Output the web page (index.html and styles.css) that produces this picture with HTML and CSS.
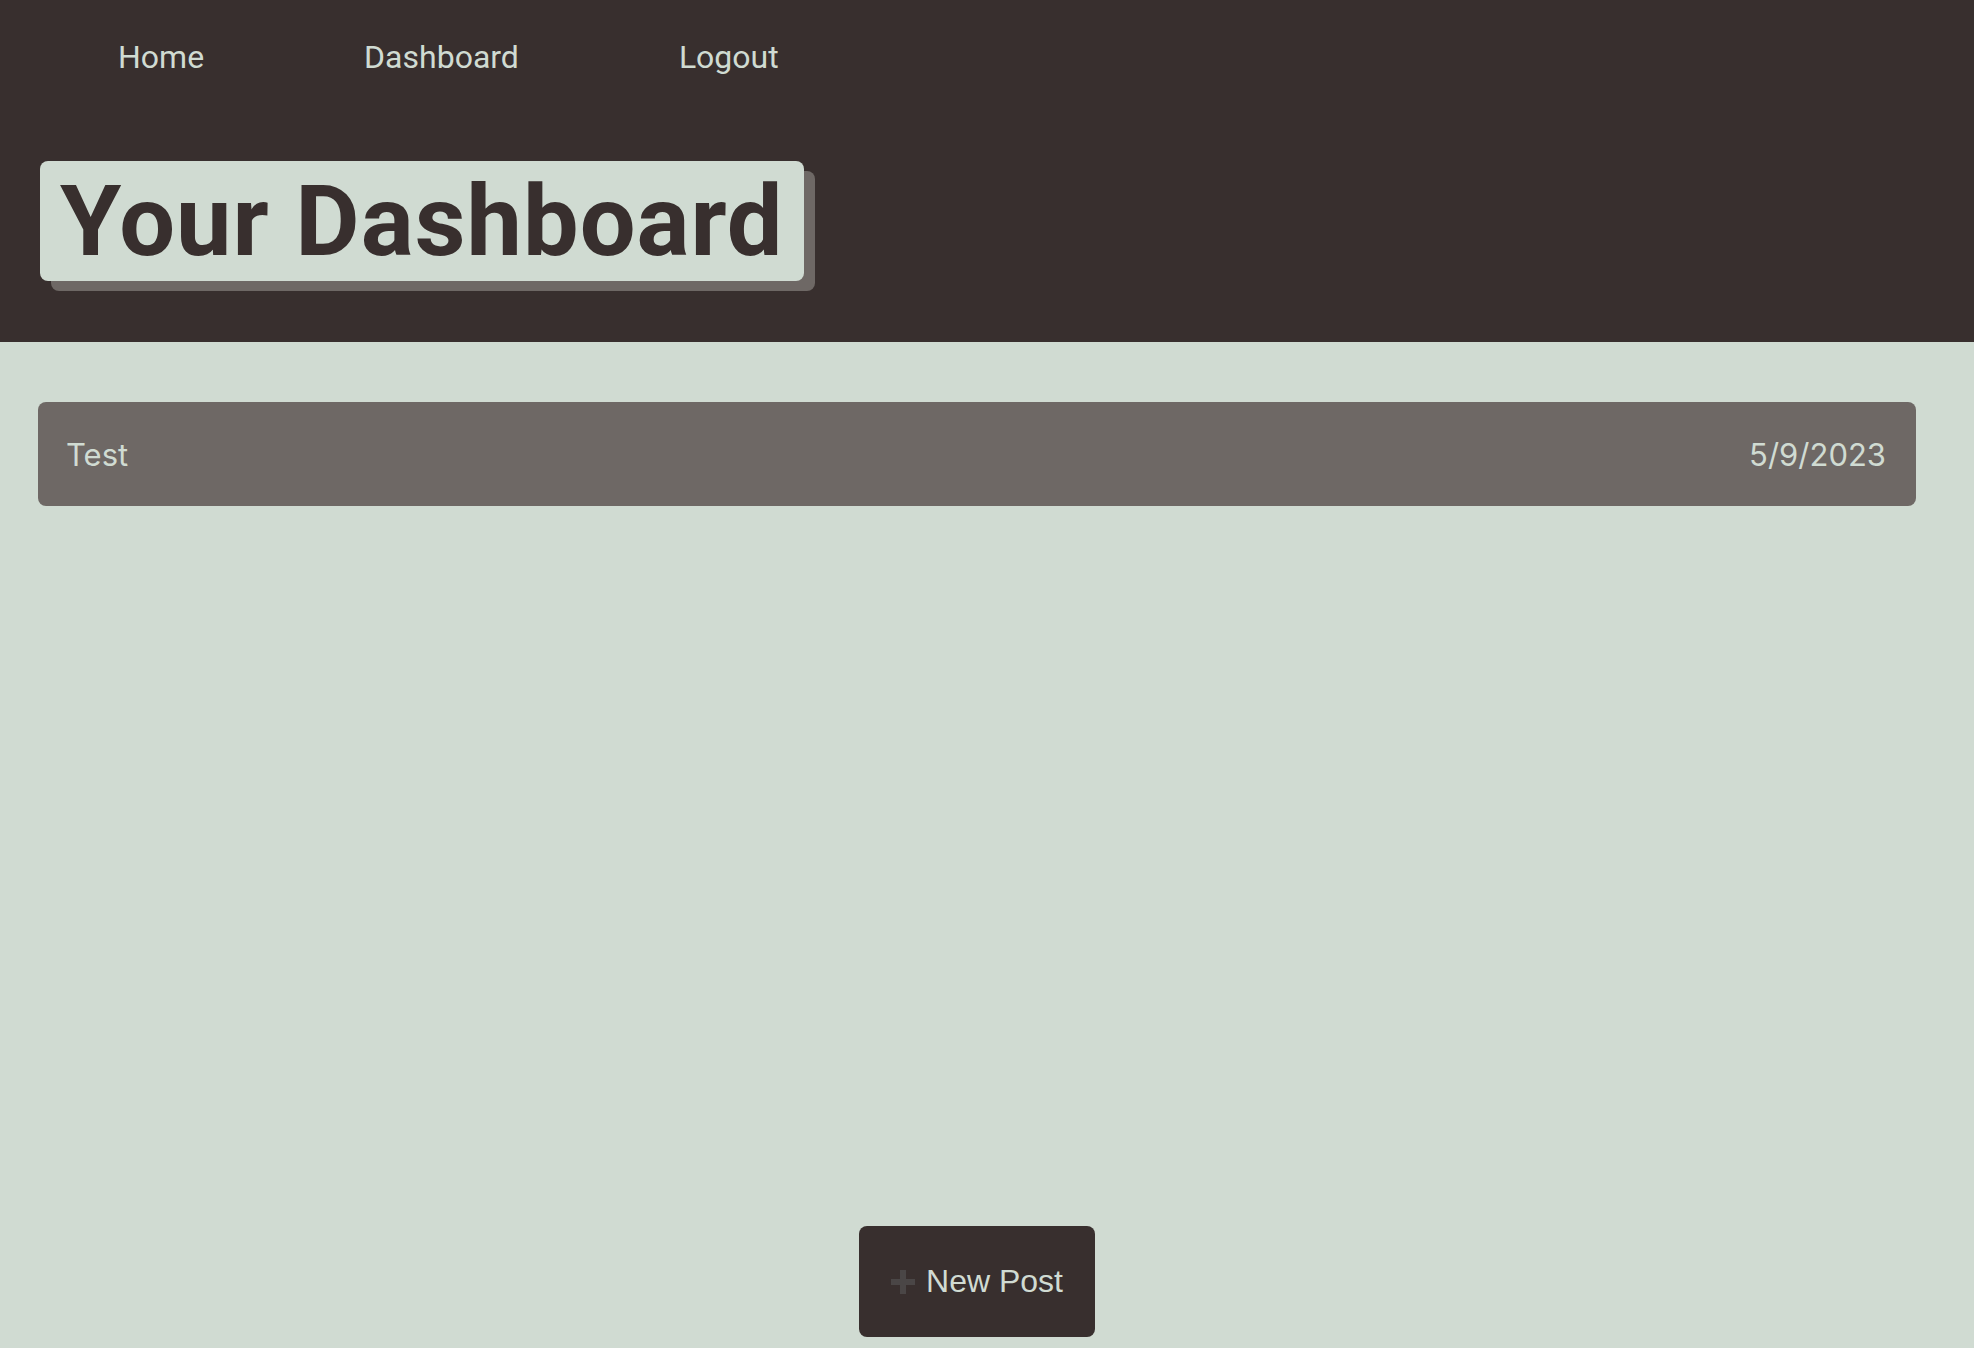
FILE: index.html
```html
<!DOCTYPE html>
<html lang="en">
<head>
    <meta charset="UTF-8">
    <meta name="viewport" content="width=device-width, initial-scale=1.0">
    <title>Your Dashboard</title>
    <link rel="stylesheet" href="styles.css">
</head>
<body>
    <header class="site-header">
        <nav class="nav">
            <a href="#" class="nav-link">Home</a>
            <a href="#" class="nav-link">Dashboard</a>
            <a href="#" class="nav-link">Logout</a>
        </nav>
        <h1 class="page-title">Your Dashboard</h1>
    </header>

    <main class="content">
        <div class="post-list">
            <a href="#" class="post-card">
                <span class="post-title">Test</span>
                <span class="post-date">5/9/2023</span>
            </a>
        </div>
        <div class="actions">
            <button class="new-post">
                <svg class="plus" viewBox="0 0 24 24" width="24" height="24">
                    <path d="M12 0v24M0 12h24" stroke="#4a4646" stroke-width="6" fill="none"/>
                </svg>
                New Post
            </button>
        </div>
    </main>
</body>
</html>
```

FILE: styles.css
```css
body {
    margin: 0;
    padding: 0;
    font-family: Roboto, "Noto Sans", sans-serif;
    background-color: #d0dbd2;
    min-height: 100vh;
    display: flex;
    flex-direction: column;
}
.site-header {
    background-color: #382f2e;
    height: 342px;
    box-sizing: border-box;
    padding: 34px 40px 0;
}
.nav {
    display: flex;
    gap: 160px;
    padding-left: 78px;
}
.nav-link {
    color: #d0dbd2;
    text-decoration: none;
    font-size: 32px;
    line-height: 46px;
}
.page-title {
    display: inline-block;
    margin: 81px 0 0;
    padding: 0 20px;
    height: 120px;
    line-height: 120px;
    font-size: 99px;
    letter-spacing: 1px;
    font-weight: 700;
    color: #382f2e;
    background-color: #d0dbd2;
    border-radius: 8px;
    box-shadow: 11px 10px 0 #6e6865;
}
.content {
    flex: 1;
    display: flex;
    flex-direction: column;
    padding: 60px 58px 11px 38px;
}
.post-card {
    display: flex;
    justify-content: space-between;
    align-items: center;
    height: 104px;
    padding: 0 30px 0 28px;
    background-color: #6e6865;
    border-radius: 8px;
    color: #d0dbd2;
    text-decoration: none;
    font-family: Inter, sans-serif;
    font-size: 31px;
}
.actions {
    margin-top: auto;
    display: flex;
    justify-content: center;
}
.new-post {
    display: flex;
    align-items: center;
    gap: 11px;
    width: 236px;
    height: 111px;
    justify-content: center;
    background-color: #382f2e;
    color: #d0dbd2;
    border: none;
    border-radius: 8px;
    font-family: "Liberation Sans", Arial, sans-serif;
    font-size: 32px;
    cursor: pointer;
}
.plus {
    width: 24px;
    height: 24px;
}
```
